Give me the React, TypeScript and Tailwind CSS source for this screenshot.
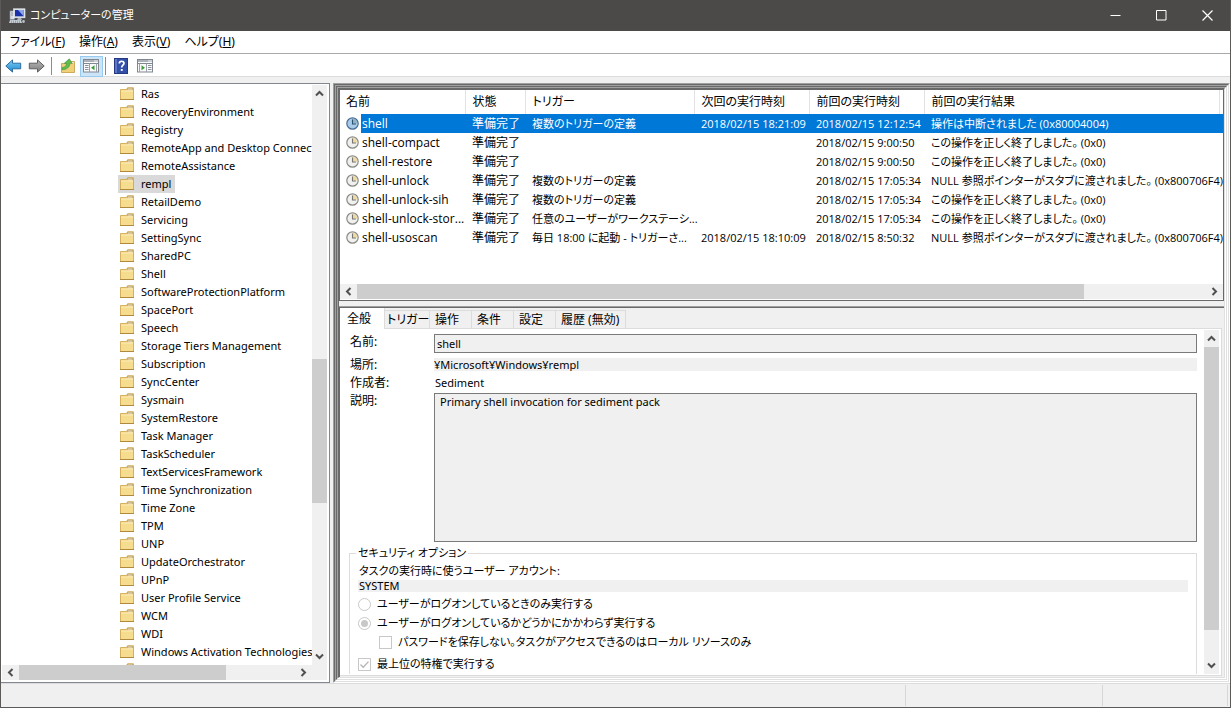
import { useState, type ReactNode } from "react";
import clsx from "clsx";

const folders = [
  "Ras",
  "RecoveryEnvironment",
  "Registry",
  "RemoteApp and Desktop Connections Update",
  "RemoteAssistance",
  "rempl",
  "RetailDemo",
  "Servicing",
  "SettingSync",
  "SharedPC",
  "Shell",
  "SoftwareProtectionPlatform",
  "SpacePort",
  "Speech",
  "Storage Tiers Management",
  "Subscription",
  "SyncCenter",
  "Sysmain",
  "SystemRestore",
  "Task Manager",
  "TaskScheduler",
  "TextServicesFramework",
  "Time Synchronization",
  "Time Zone",
  "TPM",
  "UNP",
  "UpdateOrchestrator",
  "UPnP",
  "User Profile Service",
  "WCM",
  "WDI",
  "Windows Activation Technologies",
  "",
];

const READY = "準備完了";
const DONE = "この操作を正しく終了しました。 (0x0)";
const NULL_REF = "NULL 参照ポインターがスタブに渡されました。 (0x800706F4)";

const tasks = [
  { name: "shell", trigger: "複数のトリガーの定義", next: "2018/02/15 18:21:09", last: "2018/02/15 12:12:54", result: "操作は中断されました (0x80004004)" },
  { name: "shell-compact", trigger: "", next: "", last: "2018/02/15 9:00:50", result: DONE },
  { name: "shell-restore", trigger: "", next: "", last: "2018/02/15 9:00:50", result: DONE },
  { name: "shell-unlock", trigger: "複数のトリガーの定義", next: "", last: "2018/02/15 17:05:34", result: NULL_REF },
  { name: "shell-unlock-sih", trigger: "複数のトリガーの定義", next: "", last: "2018/02/15 17:05:34", result: DONE },
  { name: "shell-unlock-stor...", trigger: "任意のユーザーがワークステーシ...", next: "", last: "2018/02/15 17:05:34", result: DONE },
  { name: "shell-usoscan", trigger: "毎日 18:00 に起動 - トリガーさ...", next: "2018/02/15 18:10:09", last: "2018/02/15 8:50:32", result: NULL_REF },
];

const columns = ["名前", "状態", "トリガー", "次回の実行時刻", "前回の実行時刻", "前回の実行結果"];

const menus = [
  { label: "ファイル", hotkey: "F" },
  { label: "操作", hotkey: "A" },
  { label: "表示", hotkey: "V" },
  { label: "ヘルプ", hotkey: "H" },
];

const tabs = [
  { name: "全般", size: "w-[45px] pl-[7px]" },
  { name: "トリガー", size: "w-[45px] pl-[2px]" },
  { name: "操作", size: "w-[42px] pl-[5px]" },
  { name: "条件", size: "w-[42px] pl-[5px]" },
  { name: "設定", size: "w-[42px] pl-[5px]" },
  { name: "履歴 (無効)", size: "w-[70px] pl-[5px]" },
];

/* ---------- icons ---------- */

const ComputerIcon = () => (
  <svg width="17" height="16" viewBox="0 0 17 16" aria-hidden="true">
    <rect x="1" y="3" width="4.500" height="8.500" fill="#d8dde4" stroke="#8b95a3" strokeWidth="0.600" />
    <path d="M2 5h3M2 7h3" stroke="#76808e" strokeWidth="0.800" />
    <rect x="4.500" y="0.800" width="11.500" height="9" fill="#d9dde8" stroke="#eef1f6" strokeWidth="0.600" />
    <rect x="6" y="2" width="8.600" height="6.300" fill="#1a2fa8" />
    <path d="M9 2h5.600v6.300z" fill="#8ba7ea" />
    <path d="M9 10h3l1 2H8z" fill="#aab3c0" />
    <path d="M1 12h11l1 3H0z" fill="#c6ccd4" />
    <path d="M2 13.200h9M2 14.400h9" stroke="#6a7482" strokeWidth="0.600" strokeDasharray="1 1" />
    <circle cx="14.500" cy="13.500" r="1.400" fill="#b7bec8" />
  </svg>
);

const ArrowIcon = ({ id, from, to, edge, flip }: { id: string; from: string; to: string; edge: string; flip?: boolean }) => (
  <svg width="17" height="14" viewBox="0 0 17 14" aria-hidden="true" className={clsx(flip && "-scale-x-100")}>
    <defs>
      <linearGradient id={id} x1="0" y1="0" x2="0" y2="1">
        <stop offset="0" stopColor={from} />
        <stop offset="1" stopColor={to} />
      </linearGradient>
    </defs>
    <path d="M0.800 7 7.500 0.900v3.300h8.200v5.600H7.500v3.300z" fill={`url(#${id})`} stroke={edge} strokeWidth="1" strokeLinejoin="round" />
  </svg>
);

const FolderUpIcon = () => (
  <svg width="16" height="16" viewBox="0 0 16 16" aria-hidden="true">
    <path d="M1.500 5.500h6l1.500-2h5.500v11h-13z" fill="#f0d078" stroke="#c39b45" strokeWidth="0.800" />
    <path d="M10.500 4.700h3" stroke="#fff" strokeWidth="1" />
    <path d="M2 9.500C5 9.500 6.300 8 6.500 5.500L4.300 5.300 9.300 0.800l3 4.700-2.300-.2C9.600 9.300 6.500 12 2 11.600z" fill="#5fbd4e" stroke="#3c9137" strokeWidth="0.600" />
  </svg>
);

const PaneIcon = ({ right }: { right?: boolean }) => (
  <svg width="17" height="14" viewBox="0 0 17 14" aria-hidden="true">
    <rect x="0.500" y="0.500" width="15" height="12.500" fill="#fafafa" stroke="#7f8791" />
    <path d="M1 2h10" stroke="#8c939d" strokeWidth="1.400" />
    <path d="M11.500 2h1M13.500 2h1" stroke="#4c5560" strokeWidth="1" />
    <path d="M0.500 4.500h15" stroke="#7f8791" />
    {right ? (
      <>
        <path d="M2.500 4.500V13M9.500 4.500V13" stroke="#9aa1aa" />
        <path d="M11 6.500h3.500M11 8.500h3.500M11 10.500h3.500" stroke="#8c939d" />
        <path d="M4.500 6.200v5L8 8.700z" fill="#3a9d3a" />
      </>
    ) : (
      <>
        <path d="M6.500 4.500V13M13.500 4.500V13" stroke="#9aa1aa" />
        <path d="M2 6.500h3.500M2 8.500h3.500M2 10.500h3.500" stroke="#8c939d" />
        <path d="M11.500 6.200v5L8 8.700z" fill="#3a9d3a" />
      </>
    )}
  </svg>
);

const HelpIcon = () => (
  <svg width="14" height="16" viewBox="0 0 14 16" aria-hidden="true">
    <rect x="0.500" y="0.500" width="13" height="15" fill="#3350a8" stroke="#24397f" />
    <path d="M1 1h2v14H1z" fill="#5d78c8" />
    <path d="M5.300 5.600c0-3.100 4.700-3 4.700-.3 0 1.900-2.300 2-2.300 4.200" fill="none" stroke="#fff" strokeWidth="1.700" />
    <rect x="6.800" y="11" width="1.900" height="1.900" fill="#fff" />
  </svg>
);

const FolderIcon = () => (
  <svg width="14" height="15" viewBox="0 0 14 15" aria-hidden="true" className="shrink-0">
    <path d="M0.500 2.500h6l1-1.700h6v11.700h-13z" fill="#f6dc8e" stroke="#cfa953" strokeWidth="0.900" />
    <path d="M7.500 1.300h5v1.500H7.500z" fill="#fffdf4" stroke="#a88a48" strokeWidth="0.600" />
    <path d="M1 3.800h6l1-.6h5v1.200H1z" fill="#fbecb8" />
    <path d="M0 12.500h14" stroke="#b08a3c" strokeWidth="1" />
  </svg>
);

const ClockIcon = ({ active }: { active: boolean }) => (
  <svg width="13" height="13" viewBox="0 0 13 13" aria-hidden="true" className="shrink-0">
    <circle cx="6.500" cy="6.500" r="5.700" fill={active ? "#a9cbea" : "#f0f0ee"} stroke={active ? "#4b6f92" : "#8a8a86"} strokeWidth="1.200" />
    <path d="M6.500 6.500V1.800a4.700 4.700 0 0 1 4.700 4.700z" fill={active ? "#8fb2c4" : "#ecd9a4"} />
    <path d="M6.500 2.600v4.400h3.400" fill="none" stroke={active ? "#2c506f" : "#77756e"} strokeWidth="1.100" />
  </svg>
);

/* ---------- frame parts ---------- */

type Direction = "up" | "down" | "left" | "right";

const chevrons: Record<Direction, string> = {
  up: "M1 6.500 4.500 3 8 6.500",
  down: "M1 2.500 4.500 6 8 2.500",
  left: "M6.500 1 3 4.500 6.500 8",
  right: "M2.500 1 6 4.500 2.500 8",
};

const ScrollButton = ({ direction, label }: { direction: Direction; label: string }) => (
  <button type="button" aria-label={label} className="flex h-[17px] w-[17px] shrink-0 items-center justify-center">
    <svg width="9" height="9" viewBox="0 0 9 9" aria-hidden="true">
      <path d={chevrons[direction]} fill="none" stroke="#505050" strokeWidth="2" />
    </svg>
  </button>
);

// before / thumb / after are the relative lengths of the track
const ScrollBar = ({ vertical, before, thumb, after }: { vertical?: boolean; before: number; thumb: number; after: number }) => (
  <div className={clsx("flex shrink-0 items-center overflow-hidden bg-[#f0f0f0]", vertical ? "w-[15px] flex-col" : "h-[15px] min-w-0")}>
    <ScrollButton direction={vertical ? "up" : "left"} label={vertical ? "上へ" : "左へ"} />
    <div className={clsx("flex flex-1 self-stretch", vertical && "flex-col")}>
      <div style={{ flexGrow: before }} />
      <div className="bg-[#cdcdcd]" style={{ flexGrow: thumb }} />
      <div style={{ flexGrow: after }} />
    </div>
    <ScrollButton direction={vertical ? "down" : "right"} label={vertical ? "下へ" : "右へ"} />
  </div>
);

const Sunken = ({ children }: { children: ReactNode }) => (
  <div className="flex min-h-0 min-w-0 flex-1 border border-t-[#a0a0a0] border-r-white border-b-white border-l-[#a0a0a0]">
    <div className="flex min-h-0 min-w-0 flex-1 flex-col border border-t-[#696969] border-r-[#e0e0e0] border-b-[#e0e0e0] border-l-[#696969]">
      {children}
    </div>
  </div>
);

const TitleBar = () => (
  <header className="flex h-[31px] shrink-0 items-center bg-[#4b4a48] text-white">
    <div className="flex flex-1 items-center gap-1 pl-2">
      <ComputerIcon />
      <h1 className="text-[11px]">コンピューターの管理</h1>
    </div>
    <button type="button" aria-label="最小化" className="flex h-full w-[46px] items-center justify-center">
      <svg width="11" height="11" viewBox="0 0 11 11"><path d="M0.500 5.500h10" stroke="#fff" /></svg>
    </button>
    <button type="button" aria-label="最大化" className="flex h-full w-[46px] items-center justify-center">
      <svg width="11" height="11" viewBox="0 0 11 11"><path d="M0.500 0.500h9.500v9.500H0.500z" fill="none" stroke="#fff" /></svg>
    </button>
    <button type="button" aria-label="閉じる" className="flex h-full w-[46px] items-center justify-center">
      <svg width="11" height="11" viewBox="0 0 11 11"><path d="M0.500 0.500l10 10M10.500 0.500l-10 10" stroke="#fff" strokeWidth="1.200" /></svg>
    </button>
  </header>
);

const MenuBar = () => (
  <nav className="flex h-[23px] shrink-0 items-center gap-[14px] border-b border-[#a9a9a9] bg-white pl-[9px] text-xs">
    {menus.map((menu) => (
      <button key={menu.hotkey} type="button">
        {menu.label}(<span className="underline">{menu.hotkey}</span>)
      </button>
    ))}
  </nav>
);

const ToolBar = () => (
  <div className="flex h-[23px] shrink-0 items-center border-b border-[#dcdcdc] bg-white pt-[2px] pl-1">
    <button type="button" aria-label="戻る" className="pr-[6px]">
      <ArrowIcon id="back" from="#7fd0f5" to="#1b86cf" edge="#2c6d9f" />
    </button>
    <button type="button" aria-label="進む">
      <ArrowIcon id="forward" from="#b8b8b8" to="#7d7d7d" edge="#5e5e5e" flip />
    </button>
    <div className="ml-[6px] h-[18px] w-px bg-[#8c8c8c]" />
    <button type="button" aria-label="1 つ上のレベルへ" className="ml-2">
      <FolderUpIcon />
    </button>
    <button type="button" aria-label="コンソール ツリーの表示/非表示" className="ml-1 flex h-[21px] w-[23px] items-center justify-center border border-[#99cbef] bg-[#cce4f7]">
      <PaneIcon />
    </button>
    <div className="ml-[2px] h-[18px] w-px bg-[#8c8c8c]" />
    <button type="button" aria-label="ヘルプ" className="ml-2">
      <HelpIcon />
    </button>
    <button type="button" aria-label="操作ウィンドウの表示/非表示" className="ml-[9px]">
      <PaneIcon right />
    </button>
  </div>
);

const FolderTree = () => {
  const [selected, setSelected] = useState("rempl");

  return (
    <aside className="flex w-[329px] shrink-0 flex-col border border-l-0 border-[#828790] bg-white pt-px pr-[2px] pb-[2px] pl-px text-[11px]">
      <div className="flex min-h-0 flex-1">
        <ul className="min-w-0 flex-1 overflow-hidden">
          {folders.map((folder) => (
            <li key={folder} className="flex h-[18px] pl-[116px]">
              <button
                type="button"
                onClick={() => setSelected(folder)}
                className={clsx("flex items-center gap-[7px] pr-1 pl-[2px] whitespace-nowrap", folder === selected && "bg-[#d9d9d9]")}
              >
                <FolderIcon />
                {folder}
              </button>
            </li>
          ))}
        </ul>
        <ScrollBar vertical before={257} thumb={144} after={145} />
      </div>
      <div className="flex bg-[#f0f0f0] pr-[15px]">
        <div className="min-w-0 flex-1">
          <ScrollBar before={0} thumb={205} after={69} />
        </div>
      </div>
    </aside>
  );
};

const TaskList = () => {
  const [selected, setSelected] = useState("shell");

  return (
    <section className="flex h-[212px] shrink-0 flex-col border border-[#696969] bg-white pb-px font-['Open_Sans','Noto_Sans_CJK_JP',sans-serif] text-[11px]">
      <div className="min-h-0 flex-1 overflow-hidden">
        <table className="w-full table-fixed border-collapse">
          <colgroup>
            <col className="w-[125px]" />
            <col className="w-[60px]" />
            <col className="w-[169px]" />
            <col className="w-[115px]" />
            <col className="w-[115px]" />
            <col />
            <col className="w-1" />
          </colgroup>
          <thead>
            <tr className="h-6 text-left">
              {columns.map((column) => (
                <th key={column} className="border-r border-[#e2e2e2] p-0 pl-[7px] text-xs font-normal first:pl-[6px]">
                  {column}
                </th>
              ))}
              <td className="p-0" />
            </tr>
          </thead>
          <tbody>
            {tasks.map((task) => {
              const active = task.name === selected;
              const cell = clsx("p-0 pl-[7px]", active && "bg-[#0078d7] text-white");
              return (
                <tr key={task.name} onClick={() => setSelected(task.name)} className="h-[19px] leading-4 whitespace-nowrap">
                  <td className="p-0">
                    <div className="flex items-center gap-[2px] pl-[6px]">
                      <ClockIcon active={active} />
                      <span className={clsx("flex-1 pl-px text-xs leading-[19px]", active && "bg-[#0078d7] text-white")}>{task.name}</span>
                    </div>
                  </td>
                  <td className={clsx(cell, "text-xs")}>{READY}</td>
                  <td className={cell}>{task.trigger}</td>
                  <td className={cell}>{task.next}</td>
                  <td className={cell}>{task.last}</td>
                  <td colSpan={2} className={cell}>{task.result}</td>
                </tr>
              );
            })}
          </tbody>
        </table>
      </div>
      <ScrollBar before={0} thumb={727} after={122} />
    </section>
  );
};

const GeneralPage = () => (
  <form className="min-w-0 flex-1 overflow-hidden pt-[5px] pr-[7px] pl-[9px]">
    <div className="grid grid-cols-[85px_1fr] text-[11px] leading-[14px]">
      <label htmlFor="task-name" className="pt-px pl-px text-xs leading-[14px]">名前:</label>
      <input id="task-name" readOnly defaultValue="shell" className="h-[19px] border border-[#7a7a7a] bg-[#f0f0f0] px-[2px] outline-none" />
      <label htmlFor="task-path" className="mt-[5px] pl-px text-xs leading-[14px]">場所:</label>
      <input id="task-path" readOnly defaultValue="¥Microsoft¥Windows¥rempl" className="mt-[5px] h-[13px] bg-[#f0f0f0] outline-none" />
      <label htmlFor="task-author" className="mt-1 pl-px text-xs leading-[14px]">作成者:</label>
      <input id="task-author" readOnly defaultValue="Sediment" className="mt-1 h-[14px] bg-white pl-px outline-none" />
      <label htmlFor="task-note" className="mt-[3px] pt-px pl-px text-xs leading-[14px]">説明:</label>
      <textarea
        id="task-note"
        readOnly
        defaultValue="Primary shell invocation for sediment pack"
        className="mt-[3px] h-[149px] resize-none border border-[#7a7a7a] bg-[#f0f0f0] px-[5px] pt-px outline-none"
      />
    </div>
    <fieldset className="mt-1 h-40 min-w-0 border border-[#dcdcdc] pr-2 pl-2 text-[11px] leading-[14px]">
      <legend className="-ml-[2px] px-[2px]">セキュリティ オプション</legend>
      <label htmlFor="account" className="block pt-1 pl-px">タスクの実行時に使うユーザー アカウント:</label>
      <input id="account" readOnly defaultValue="SYSTEM" className="mt-[2px] block h-3 w-full bg-[#f0f0f0] pl-px outline-none" />
      <label className="mt-[5px] flex h-[14px] items-center gap-[6px]">
        <input type="radio" name="logon" disabled className="size-[13px] shrink-0 appearance-none rounded-full border border-[#c8c8c8] bg-white" />
        ユーザーがログオンしているときのみ実行する
      </label>
      <label className="mt-[5px] flex h-[14px] items-center gap-[6px]">
        <input
          type="radio"
          name="logon"
          disabled
          defaultChecked
          className="size-[13px] shrink-0 appearance-none rounded-full border border-[#c8c8c8] bg-[#c8c8c8] bg-clip-content p-[2px]"
        />
        ユーザーがログオンしているかどうかにかかわらず実行する
      </label>
      <label className="mt-[5px] ml-[21px] flex h-[14px] items-center gap-[6px]">
        <input type="checkbox" disabled className="size-[13px] shrink-0 appearance-none border border-[#c8c8c8] bg-white" />
        パスワードを保存しない。タスクがアクセスできるのはローカル リソースのみ
      </label>
      <label className="mt-2 flex h-[14px] items-center gap-[6px]">
        <span className="relative size-[13px] shrink-0">
          <input type="checkbox" disabled defaultChecked className="block size-[13px] appearance-none border border-[#c8c8c8] bg-white" />
          <svg width="13" height="13" viewBox="0 0 13 13" aria-hidden="true" className="absolute inset-0">
            <path d="M2.500 6.500 5.200 9.200 10.500 3.600" fill="none" stroke="#b5b5b5" strokeWidth="1.300" />
          </svg>
        </span>
        最上位の特権で実行する
      </label>
    </fieldset>
  </form>
);

const TaskDetail = () => {
  const [selected, setSelected] = useState("全般");

  return (
    <section className="flex min-h-0 flex-1 flex-col border-t border-l border-[#696969] bg-[#f0f0f0] pr-[2px] pb-px">
      <div role="tablist" className="flex h-[21px] shrink-0 items-end text-xs">
        {tabs.map((tab) => (
          <button
            key={tab.name}
            type="button"
            role="tab"
            aria-selected={tab.name === selected}
            onClick={() => setSelected(tab.name)}
            className={clsx(
              "border-r border-[#dcdcdc] text-left whitespace-nowrap",
              tab.size,
              tab.name === selected ? "h-[21px] bg-white" : "h-[19px] border-t border-b"
            )}
          >
            {tab.name}
          </button>
        ))}
        <div className="flex-1 self-stretch border-b border-[#dcdcdc]" />
      </div>
      <div className="flex min-h-0 flex-1 border-r border-b border-[#dcdcdc] bg-white pr-[2px] pb-px">
        <GeneralPage />
        <div className="flex pt-px">
          <ScrollBar vertical before={0} thumb={282} after={27} />
        </div>
      </div>
    </section>
  );
};

export default function App() {
  return (
    <div className="flex h-screen flex-col overflow-hidden border border-t-0 border-[#5b5a58] bg-[#f0f0f0] font-['Noto_Sans','Noto_Sans_CJK_JP',sans-serif] text-black [font-feature-settings:'palt']">
      <TitleBar />
      <MenuBar />
      <ToolBar />
      <main className="flex min-h-0 flex-1 gap-[3px] pt-[6px]">
        <FolderTree />
        <Sunken>
          <Sunken>
            <Sunken>
              <TaskList />
              <div className="h-[6px] shrink-0 border-b border-[#a0a0a0]" />
              <TaskDetail />
            </Sunken>
          </Sunken>
        </Sunken>
      </main>
      <footer className="flex h-6 shrink-0 border-t border-[#dcdcdc] py-px pr-[2px]">
        <div className="flex-1 border-r border-[#d7d7d7]" />
        <div className="w-[197px] border-r border-[#d7d7d7]" />
        <div className="w-[125px] border-r border-[#d7d7d7]" />
      </footer>
    </div>
  );
}
